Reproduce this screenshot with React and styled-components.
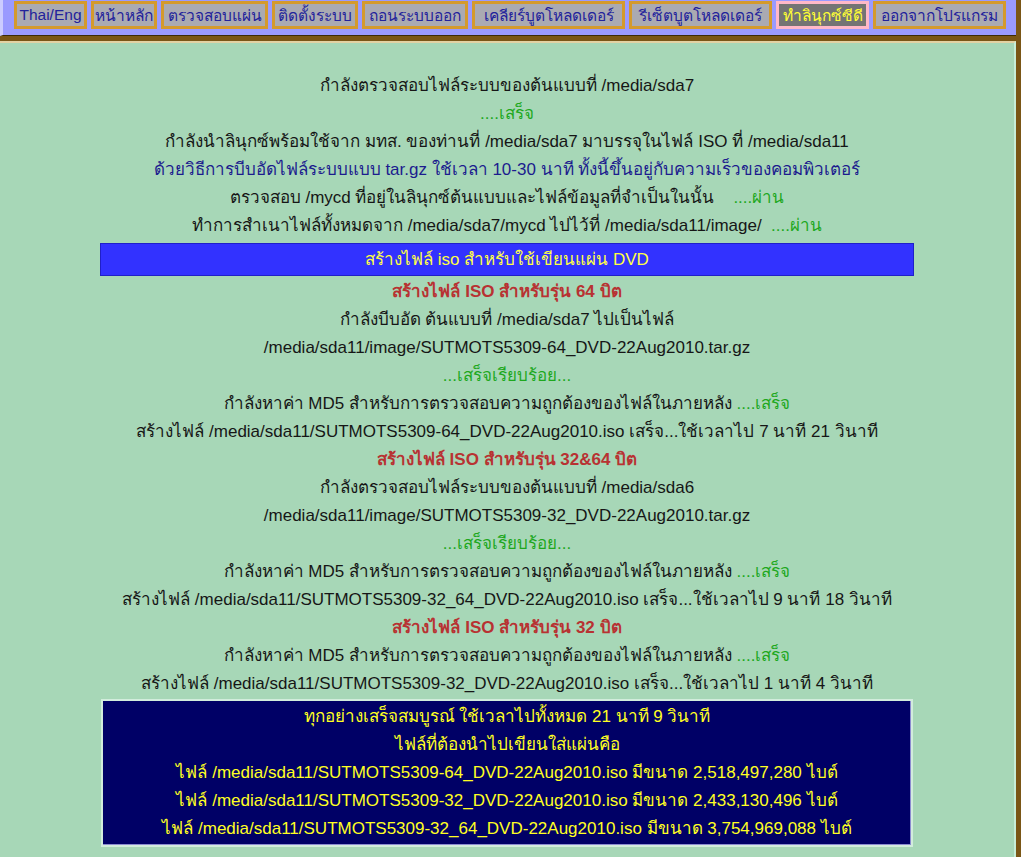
import React from 'react';
import styled, { createGlobalStyle } from 'styled-components';

const GlobalStyle = createGlobalStyle`
  html, body {
    margin: 0;
    padding: 0;
    background: #7a5616;
  }
  body {
    font-family: "Liberation Sans", Tahoma, sans-serif;
  }
`;

const Page = styled.div`
  display: flex;
  flex-direction: column;
  min-height: 857px;
  padding-right: 5px;
  background: #7a5616;
`;

const NavBar = styled.nav`
  display: flex;
  align-items: flex-start;
  gap: 4px;
  height: 34px;
  padding: 1px 0 0 11px;
  background: #9a9aff;
  border-left: 3px solid #ccccff;
  border-bottom: 1px solid #3c2a08;
  margin-bottom: 5px;
`;

const NavButton = styled.a`
  display: flex;
  align-items: center;
  justify-content: center;
  box-sizing: border-box;
  flex: none;
  width: ${(p) => p.$w}px;
  height: 28px;
  font-size: 15.5px;
  color: ${(p) => (p.$active ? '#ffff33' : '#22229c')};
  background: ${(p) => (p.$active ? '#747474' : '#aaaab2')};
  border: 3px solid ${(p) => (p.$active ? '#ffb8c8' : '#d49a2c')};
  white-space: nowrap;
  cursor: pointer;
`;

const Content = styled.main`
  flex: 1;
  background: #a7d7b7;
  border-top: 2px solid #e2d2a4;
  border-right: 2px solid #c8eed8;
  padding: 29px 0 8px;
`;

const Row = styled.div`
  height: 28px;
  line-height: 28px;
  text-align: center;
  font-size: 17px;
  white-space: nowrap;
  color: ${(p) =>
    p.$tone === 'green' ? '#1ea81e' : p.$tone === 'navy' ? '#1c1c8e' : p.$tone === 'red' ? '#b83232' : '#161616'};
  font-weight: ${(p) => (p.$tone === 'red' ? 'bold' : 'normal')};
`;

const Done = styled.span`
  color: #1ea81e;
`;

const StageBar = styled.div`
  width: 80%;
  margin: 3px auto 2px;
  height: 31px;
  line-height: 31px;
  text-align: center;
  font-size: 17px;
  color: #ffff44;
  background: #3232ff;
  border: 1px solid #2020c8;
`;

const SummaryBox = styled.div`
  width: 80%;
  box-sizing: border-box;
  margin: 1px auto 0;
  padding: 2px 0;
  background: #000066;
  border: 2px solid #d2ecdc;
  box-shadow: inset -1px -1px 0 #8c8cd0;
`;

const SummaryRow = styled.div`
  height: 28px;
  line-height: 28px;
  text-align: center;
  font-size: 17px;
  color: #ffff22;
  white-space: nowrap;
`;

const menu = [
  { label: 'Thai/Eng', w: 73 },
  { label: 'หน้าหลัก', w: 66 },
  { label: 'ตรวจสอบแผ่น', w: 107 },
  { label: 'ติดตั้งระบบ', w: 86 },
  { label: 'ถอนระบบออก', w: 106 },
  { label: 'เคลียร์บูตโหลดเดอร์', w: 153 },
  { label: 'รีเซ็ตบูตโหลดเดอร์', w: 143 },
  { label: 'ทำลินุกซ์ซีดี', w: 93, active: true },
  { label: 'ออกจากโปรแกรม', w: 133 },
];

const md5 = 'กำลังหาค่า MD5 สำหรับการตรวจสอบความถูกต้องของไฟล์ในภายหลัง';

const App = () => {
  return (
    <>
      <GlobalStyle />
      <Page>
        <NavBar>
          {menu.map((item) => (
            <NavButton key={item.label} $w={item.w} $active={item.active}>
              {item.label}
            </NavButton>
          ))}
        </NavBar>
        <Content>
          <Row>กำลังตรวจสอบไฟล์ระบบของต้นแบบที่ /media/sda7</Row>
          <Row $tone="green">....เสร็จ</Row>
          <Row>กำลังนำลินุกซ์พร้อมใช้จาก มทส. ของท่านที่ /media/sda7 มาบรรจุในไฟล์ ISO ที่ /media/sda11</Row>
          <Row $tone="navy">ด้วยวิธีการบีบอัดไฟล์ระบบแบบ tar.gz ใช้เวลา 10-30 นาที ทั้งนี้ขึ้นอยู่กับความเร็วของคอมพิวเตอร์</Row>
          <Row>
            ตรวจสอบ /mycd ที่อยู่ในลินุกซ์ต้นแบบและไฟล์ข้อมูลที่จำเป็นในนั้น&nbsp;&nbsp;&nbsp; <Done>....ผ่าน</Done>
          </Row>
          <Row>
            ทำการสำเนาไฟล์ทั้งหมดจาก /media/sda7/mycd ไปไว้ที่ /media/sda11/image/&nbsp; <Done>....ผ่าน</Done>
          </Row>
          <StageBar>สร้างไฟล์ iso สำหรับใช้เขียนแผ่น DVD</StageBar>
          <Row $tone="red">สร้างไฟล์ ISO สำหรับรุ่น 64 บิต</Row>
          <Row>กำลังบีบอัด ต้นแบบที่ /media/sda7 ไปเป็นไฟล์</Row>
          <Row>/media/sda11/image/SUTMOTS5309-64_DVD-22Aug2010.tar.gz</Row>
          <Row $tone="green">...เสร็จเรียบร้อย...</Row>
          <Row>
            {md5} <Done>....เสร็จ</Done>
          </Row>
          <Row>สร้างไฟล์ /media/sda11/SUTMOTS5309-64_DVD-22Aug2010.iso เสร็จ...ใช้เวลาไป 7 นาที 21 วินาที</Row>
          <Row $tone="red">สร้างไฟล์ ISO สำหรับรุ่น 32&amp;64 บิต</Row>
          <Row>กำลังตรวจสอบไฟล์ระบบของต้นแบบที่ /media/sda6</Row>
          <Row>/media/sda11/image/SUTMOTS5309-32_DVD-22Aug2010.tar.gz</Row>
          <Row $tone="green">...เสร็จเรียบร้อย...</Row>
          <Row>
            {md5} <Done>....เสร็จ</Done>
          </Row>
          <Row>สร้างไฟล์ /media/sda11/SUTMOTS5309-32_64_DVD-22Aug2010.iso เสร็จ...ใช้เวลาไป 9 นาที 18 วินาที</Row>
          <Row $tone="red">สร้างไฟล์ ISO สำหรับรุ่น 32 บิต</Row>
          <Row>
            {md5} <Done>....เสร็จ</Done>
          </Row>
          <Row>สร้างไฟล์ /media/sda11/SUTMOTS5309-32_DVD-22Aug2010.iso เสร็จ...ใช้เวลาไป 1 นาที 4 วินาที</Row>
          <SummaryBox>
            <SummaryRow>ทุกอย่างเสร็จสมบูรณ์ ใช้เวลาไปทั้งหมด 21 นาที 9 วินาที</SummaryRow>
            <SummaryRow>ไฟล์ที่ต้องนำไปเขียนใส่แผ่นคือ</SummaryRow>
            <SummaryRow>ไฟล์ /media/sda11/SUTMOTS5309-64_DVD-22Aug2010.iso มีขนาด 2,518,497,280 ไบต์</SummaryRow>
            <SummaryRow>ไฟล์ /media/sda11/SUTMOTS5309-32_DVD-22Aug2010.iso มีขนาด 2,433,130,496 ไบต์</SummaryRow>
            <SummaryRow>ไฟล์ /media/sda11/SUTMOTS5309-32_64_DVD-22Aug2010.iso มีขนาด 3,754,969,088 ไบต์</SummaryRow>
          </SummaryBox>
        </Content>
      </Page>
    </>
  );
};

export default App;
